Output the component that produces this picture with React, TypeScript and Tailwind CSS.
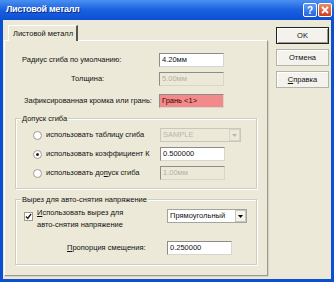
import React from 'react';

const font = { fontFamily: '"Liberation Sans", Arial, sans-serif' };

const Field: React.FC<{ value: string; disabled?: boolean; red?: boolean; w?: string }> = ({ value, disabled, red, w = 'w-[65px]' }) => (
  <div
    className={`${w} h-[14px] shrink-0 flex items-center pl-[2px] border border-t-[#8c8c8c] border-l-[#8c8c8c] border-r-[#d8d6cc] border-b-[#d8d6cc] ${
      red ? 'bg-[#f28a8c] text-[#3a0000]' : disabled ? 'bg-[#ece9d8] text-[#b2b0a6]' : 'bg-white text-[#111]'
    }`}
  >
    {value}
  </div>
);

const Select: React.FC<{ value: string; disabled?: boolean; w: string }> = ({ value, disabled, w }) => (
  <div
    className={`${w} h-[14px] shrink-0 flex items-center justify-between border ${
      disabled ? 'border-[#c9c7ba] bg-[#ece9d8] text-[#b8b6ab]' : 'border-[#a5a5a0] bg-white text-[#111]'
    }`}
  >
    <span className="pl-[2px]">{value}</span>
    <div
      className={`w-[11px] h-[12px] flex items-center justify-center border ${
        disabled ? 'border-[#d6d4c8] bg-[#ece9d8]' : 'border-[#c8c6bc] bg-[#f4f3ee]'
      }`}
    >
      <svg width="5" height="3" viewBox="0 0 5 3">
        <path d="M0 0h5L2.5 3z" fill={disabled ? '#b8b6ab' : '#000'} />
      </svg>
    </div>
  </div>
);

const Radio: React.FC<{ checked?: boolean }> = ({ checked }) => (
  <div className="w-[9px] h-[9px] rounded-full bg-white border border-[#9d9b90] flex items-center justify-center shrink-0">
    {checked && <div className="w-[3px] h-[3px] rounded-full bg-[#222]" />}
  </div>
);

const Group: React.FC<{ title: string; h: string; children: React.ReactNode }> = ({ title, h, children }) => (
  <div className={`relative ml-[10px] w-[242px] ${h} border border-[#cfcdc0] shadow-[inset_1px_1px_0_#fff,1px_1px_0_#fff]`}>
    <span className="absolute left-[5px] -top-[6px] px-[1px] bg-[#ece9d8] leading-[11px] text-[#111]">{title}</span>
    {children}
  </div>
);

const Btn: React.FC<{ label: React.ReactNode; def?: boolean }> = ({ label, def }) => (
  <div
    className={`w-[53px] h-[17px] flex items-center justify-center text-[#111] bg-[#f3f2ec] ${
      def ? 'border border-[#222] shadow-[inset_1px_1px_0_#fff,inset_-1px_-1px_0_#9c9a90]' : 'border border-[#b5b3a8] shadow-[inset_1px_1px_0_#fff]'
    }`}
  >
    {label}
  </div>
);

export default function App() {
  return (
    <div className="w-[334px] h-[282px] bg-[#0b4fd4] flex flex-col overflow-hidden text-[7.5px]" style={font}>
      <div className="h-[20px] shrink-0 flex items-center justify-between bg-gradient-to-b from-[#4a90f0] via-[#1a5fe0] to-[#0b4fd4] pl-[6px] pr-[2px]">
        <span className="text-white font-bold text-[9px] tracking-[-0.3px] [text-shadow:1px_1px_0_#0a2a80]">Листовой металл</span>
        <div className="flex gap-[1px]">
          <div className="w-[14px] h-[14px] rounded-[2px] border border-white bg-gradient-to-b from-[#5f9cf5] to-[#2a63dc] flex items-center justify-center text-white font-bold text-[10px]">?</div>
          <div className="w-[14px] h-[14px] rounded-[2px] border border-white bg-gradient-to-b from-[#e98b6a] to-[#cf3a16] flex items-center justify-center">
            <svg width="8" height="8" viewBox="0 0 8 8">
              <path d="M1 1l6 6M7 1L1 7" stroke="#fff" strokeWidth="1.8" />
            </svg>
          </div>
        </div>
      </div>
      <div className="flex-1 mx-[3px] mb-[3px] bg-[#ece9d8] flex">
        <div className="flex flex-col ml-[1px] mt-[5px] w-[264px]">
          <div className="ml-[4px] w-[70px] h-[16px] -mb-[1px] z-10 flex items-center pl-[4px] whitespace-nowrap bg-[#ece9d8] border-t border-l border-white border-r-2 border-r-[#555] text-[#111]">
            Листовой металл
          </div>
          <div className="h-[236px] flex flex-col border border-t-white border-l-white border-r-[#9c9a90] border-b-[#9c9a90] shadow-[1px_1px_0_#d6d3c4]">
            <div className="flex items-center mt-[12px] h-[14px]">
              <span className="w-[154px] pl-[17px] text-[#111]">Радиус сгиба по умолчанию:</span>
              <Field value="4.20мм" />
            </div>
            <div className="flex items-center mt-[5px] h-[14px]">
              <span className="w-[154px] pl-[66px] text-[#111]">Толщина:</span>
              <Field value="5.00мм" disabled />
            </div>
            <div className="flex items-center mt-[8px] h-[14px]">
              <span className="w-[154px] pl-[19px] text-[#111] whitespace-nowrap">Зафиксированная кромка или грань:</span>
              <Field value="Грань <1>" red />
            </div>
            <div className="mt-[10px]">
              <Group title="Допуск сгиба" h="h-[71px]">
                <div className="flex flex-col gap-[5px] mt-[9px]">
                  <div className="flex items-center h-[14px]">
                    <div className="w-[144px] flex items-center gap-[4px] pl-[17px] text-[#111] whitespace-nowrap">
                      <Radio />
                      <span>использовать таблицу сгиба</span>
                    </div>
                    <Select value="SAMPLE" disabled w="w-[81px]" />
                  </div>
                  <div className="flex items-center h-[14px]">
                    <div className="w-[144px] flex items-center gap-[4px] pl-[17px] text-[#111] whitespace-nowrap">
                      <Radio checked />
                      <span>использовать коэффициент К</span>
                    </div>
                    <Field value="0.500000" />
                  </div>
                  <div className="flex items-center h-[14px]">
                    <div className="w-[144px] flex items-center gap-[4px] pl-[17px] text-[#111] whitespace-nowrap">
                      <Radio />
                      <span>
                        использовать до<span className="underline">п</span>уск сгиба
                      </span>
                    </div>
                    <Field value="1.00мм" disabled />
                  </div>
                </div>
              </Group>
            </div>
            <div className="mt-[10px]">
              <Group title="Вырез для авто-снятия напряжение" h="h-[66px]">
                <div className="flex mt-[7px]">
                  <div className="w-[151px] flex items-start gap-[4px] pl-[8px] text-[#111]">
                    <div className="w-[9px] h-[9px] mt-[5px] bg-white border border-[#9d9b90] flex items-center justify-center shrink-0">
                      <svg width="7" height="7" viewBox="0 0 7 7">
                        <path d="M1 3.5l1.8 2L6 1" stroke="#222" strokeWidth="1.4" fill="none" />
                      </svg>
                    </div>
                    <span className="leading-[12px] whitespace-nowrap">
                      <span className="underline">И</span>спользовать вырез для
                      <br />
                      авто-снятия напряжение
                    </span>
                  </div>
                  <div className="mt-[2px]">
                    <Select value="Прямоугольный" w="w-[80px]" />
                  </div>
                </div>
                <div className="flex items-center mt-[10px] h-[14px]">
                  <span className="w-[151px] pl-[51px] text-[#111]">
                    <span className="underline">П</span>ропорция смещения:
                  </span>
                  <Field value="0.250000" />
                </div>
              </Group>
            </div>
          </div>
        </div>
        <div className="flex flex-col ml-[8px] mt-[7px] gap-[5px]">
          <Btn label="OK" def />
          <Btn label="Отмена" />
          <Btn
            label={
              <span>
                <span className="underline">С</span>правка
              </span>
            }
          />
        </div>
      </div>
    </div>
  );
}
